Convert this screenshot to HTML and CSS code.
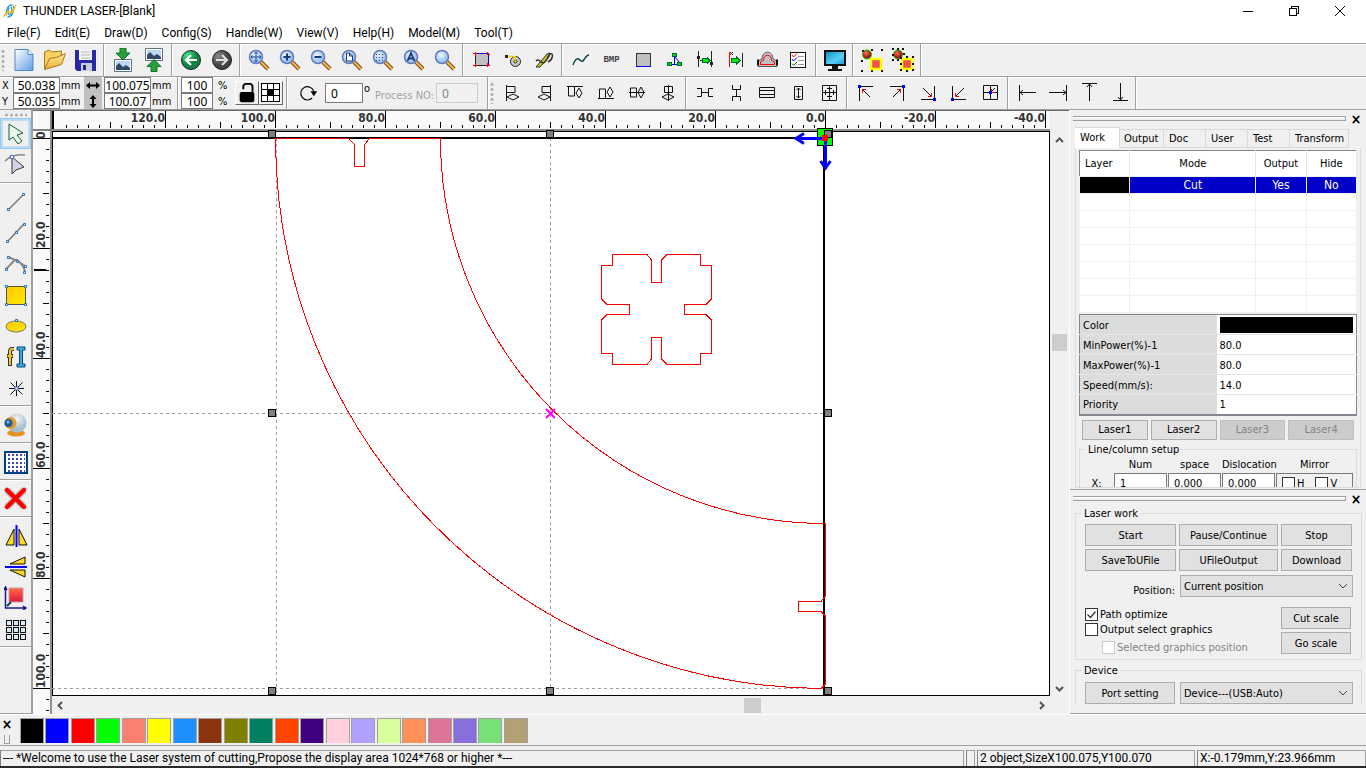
FILE: index.html
```html
<!DOCTYPE html>
<html lang="en">
<head>
    <meta charset="UTF-8">
    <meta name="viewport" content="width=device-width, initial-scale=1.0">
    <title>THUNDER LASER-[Blank]</title>
    <link rel="stylesheet" href="styles.css">
</head>
<body>
    <svg class="defs" aria-hidden="true">
        <defs>
            <linearGradient id="page" x1="0" y1="0" x2="1" y2="1">
                <stop offset="0" stop-color="#ffffff"/>
                <stop offset="1" stop-color="#5f9fe8"/>
            </linearGradient>
            <linearGradient id="folder" x1="0" y1="0" x2="0" y2="1">
                <stop offset="0" stop-color="#ffe9a0"/>
                <stop offset="1" stop-color="#f0b030"/>
            </linearGradient>
            <linearGradient id="sky" x1="0" y1="0" x2="1" y2="1">
                <stop offset="0" stop-color="#1090c8"/>
                <stop offset="0.6" stop-color="#58d0f4"/>
                <stop offset="1" stop-color="#18a0d8"/>
            </linearGradient>
            <linearGradient id="gold" x1="0" y1="0" x2="1" y2="1">
                <stop offset="0" stop-color="#ffc800"/>
                <stop offset="1" stop-color="#ffe800"/>
            </linearGradient>
            <linearGradient id="redbox" x1="0" y1="0" x2="0" y2="1">
                <stop offset="0" stop-color="#ff6a4a"/>
                <stop offset="1" stop-color="#d81838"/>
            </linearGradient>
            <radialGradient id="lens" cx="0.4" cy="0.35">
                <stop offset="0" stop-color="#f0f8ff"/>
                <stop offset="1" stop-color="#9cc4ee"/>
            </radialGradient>
            <radialGradient id="greenball" cx="0.3" cy="0.25">
                <stop offset="0" stop-color="#40e880"/>
                <stop offset="1" stop-color="#108040"/>
            </radialGradient>
            <radialGradient id="grayball" cx="0.3" cy="0.3">
                <stop offset="0" stop-color="#8a8a8a"/>
                <stop offset="1" stop-color="#404040"/>
            </radialGradient>
            <radialGradient id="redball" cx="0.4" cy="0.35">
                <stop offset="0" stop-color="#ff7050"/>
                <stop offset="1" stop-color="#a01010"/>
            </radialGradient>
            <radialGradient id="cam" cx="0.5" cy="0.3">
                <stop offset="0" stop-color="#f4f8fc"/>
                <stop offset="1" stop-color="#a8c0d4"/>
            </radialGradient>
            <symbol id="magnifier" viewBox="0 0 24 24">
                <path d="M14 14l7 7" stroke="#7c4a10" stroke-width="4"/>
                <path d="M14 14l7 7" stroke="#f4bc50" stroke-width="2"/>
                <circle cx="9" cy="9" r="6.5" fill="url(#lens)" stroke="#6478c0" stroke-width="1.5"/>
            </symbol>
            <symbol id="picture" viewBox="0 0 18 13">
                <path d="M.5.5h17v12H.5z" fill="#fff" stroke="#607080"/>
                <path d="M2 2h14v9H2z" fill="#bcd8f4"/>
                <path d="M2 11V7l3-3 4 4 3-2 4 3v2z" fill="#304868"/>
            </symbol>
            <pattern id="hticks" x="113" y="0" width="110" height="18" patternUnits="userSpaceOnUse">
                <path d="M.5 0v17M55.5 11v6M11.5 14v3M22.5 14v3M33.5 14v3M44.5 14v3M66.5 14v3M77.5 14v3M88.5 14v3M99.5 14v3" stroke="#000"/>
            </pattern>
            <pattern id="vticks" x="0" y="7" width="17" height="110" patternUnits="userSpaceOnUse">
                <path d="M0 .5h17M10 55.5h6M13 11.5h3M13 22.5h3M13 33.5h3M13 44.5h3M13 66.5h3M13 77.5h3M13 88.5h3M13 99.5h3" stroke="#000"/>
            </pattern>
        </defs>
    </svg>

    <header class="titlebar">
        <svg class="logo" viewBox="0 0 16 16"><path d="M11 1C6 1 3 5 4 13M5 15c5 0 8-5 7-13M7 4c-2 4-2 7 1 9M9 3c2 3 1 7-1 9" fill="none" stroke="#1890c8" stroke-width="1.3"/><path d="M0 15L5 8l4 1 6-8-4 9-4-1z" fill="#f0b818" stroke="#f0b818"/></svg>
        <h1>THUNDER LASER-[Blank]</h1>
        <div class="winbuttons">
            <button aria-label="Minimize"><svg viewBox="0 0 12 12"><path d="M1 6.5h10"/></svg></button>
            <button aria-label="Restore"><svg viewBox="0 0 12 12"><path d="M1.500 3.500h7v7h-7zM3.500 3.500v-2h7v7h-2"/></svg></button>
            <button aria-label="Close"><svg viewBox="0 0 12 12"><path class="smooth" d="M1 1l10 10M11 1L1 11"/></svg></button>
        </div>
    </header>

    <nav class="menubar">
        <a href="#">File(F)</a>
        <a href="#">Edit(E)</a>
        <a href="#">Draw(D)</a>
        <a href="#">Config(S)</a>
        <a href="#">Handle(W)</a>
        <a href="#">View(V)</a>
        <a href="#">Help(H)</a>
        <a href="#">Model(M)</a>
        <a href="#">Tool(T)</a>
    </nav>

    <div class="toolbar">
        <span class="grip"></span>
        <div class="group">
            <button aria-label="New"><svg viewBox="0 0 24 24"><path d="M3 1.500h13l5 5v16H3z" fill="url(#page)" stroke="#5088c0"/><path d="M16 1.500v5h5" fill="#e8f4ff" stroke="#5088c0"/></svg></button>
            <button aria-label="Open"><svg viewBox="0 0 24 24"><path d="M1.500 20V4l5-2 2 2 10-1v5" fill="#f8d060" stroke="#a87818"/><path d="M1.500 21.500l5-11 7-1 9-4-4 11z" fill="url(#folder)" stroke="#a87818"/></svg></button>
            <button aria-label="Save"><svg viewBox="0 0 24 24"><path d="M1 2h21v21H3l-2-2z" fill="#2828a8"/><path d="M5 1h13v11H5z" fill="#f4f4f4"/><path d="M7 4h9M7 7h9M7 10h9" stroke="#b8b8b8"/><path d="M7 15h11v8H7z" fill="#c8ccd8"/><path d="M9 17h3v5H9z" fill="#202880"/></svg></button>
        </div>
        <div class="group">
            <button aria-label="Import"><svg viewBox="0 0 24 24"><use href="#picture" x="3" y="11" width="18" height="13"/><path d="M9 0h6v5h4l-7 7-7-7h4z" fill="#28a040" stroke="#107028"/></svg></button>
            <button aria-label="Export"><svg viewBox="0 0 24 24"><use href="#picture" x="3" y="0" width="18" height="13"/><path d="M9 23.500h6v-5h4l-7-7-7 7h4z" fill="#28a040" stroke="#107028"/></svg></button>
        </div>
        <div class="group">
            <button aria-label="Undo"><svg viewBox="0 0 24 24"><circle cx="12" cy="12" r="9.500" fill="url(#greenball)" stroke="#222"/><path d="M18 12H7M12 7l-5 5 5 5" fill="none" stroke="#fff" stroke-width="2.200"/></svg></button>
            <button aria-label="Redo"><svg viewBox="0 0 24 24"><circle cx="12" cy="12" r="9.500" fill="url(#grayball)" stroke="#222"/><path d="M6 12h11M12 7l5 5-5 5" fill="none" stroke="#ddd" stroke-width="2.200"/></svg></button>
        </div>
        <div class="group">
            <button aria-label="Pan"><svg viewBox="0 0 24 24"><use href="#magnifier"/><path d="M9 4v10M4 9h10M7.500 5.500L9 4l1.500 1.500M7.500 12.500L9 14l1.500-1.500M5.500 7.500L4 9l1.500 1.500M12.500 7.500L14 9l-1.500 1.500" fill="none" stroke="#184890"/></svg></button>
            <button aria-label="Zoom in"><svg viewBox="0 0 24 24"><use href="#magnifier"/><path d="M5.500 9h7M9 5.500v7" stroke="#183878" stroke-width="2"/></svg></button>
            <button aria-label="Zoom out"><svg viewBox="0 0 24 24"><use href="#magnifier"/><path d="M5.500 9h7" stroke="#183878" stroke-width="2"/></svg></button>
            <button aria-label="Zoom page"><svg viewBox="0 0 24 24"><use href="#magnifier"/><path d="M6.500 5h3l3 3v5h-6zM9.500 5v3h3" fill="#fff" stroke="#184078"/></svg></button>
            <button aria-label="Zoom selection"><svg viewBox="0 0 24 24"><use href="#magnifier"/><path d="M5 6.500h8M5 9.500h8M5 12.500h8" stroke="#385090" stroke-dasharray="1 2"/></svg></button>
            <button aria-label="Zoom all"><svg viewBox="0 0 24 24"><use href="#magnifier"/><path d="M5.500 13L9 5l3.500 8M7 10.500h4" fill="none" stroke="#183878" stroke-width="1.800"/></svg></button>
            <button aria-label="Zoom window"><svg viewBox="0 0 24 24"><use href="#magnifier"/></svg></button>
        </div>
        <div class="group">
            <button aria-label="Frame"><svg class="crisp" viewBox="0 0 24 24"><path d="M5 5.500h13v12H5z" fill="#c0c0c0" stroke="#222"/><path d="M5 5.500h12M18.500 6v11" stroke="#00f"/><path d="M3 5.500h4M5.500 4v4M17 6.500h3M17.500 4v3M3 17.500h4M5.500 16v3M16 17.500h4M17.500 15v4" stroke="red"/></svg></button>
            <button aria-label="Cut path"><svg viewBox="0 0 24 24"><circle cx="14.500" cy="13.500" r="5" fill="#c8c8c8" stroke="#222"/><circle cx="14.500" cy="13.500" r="1.500" fill="#ff0" stroke="#222"/><path d="M6 8.500h8v4" fill="none" stroke="#f0d800" stroke-width="1.500"/><path d="M4 7h3v3H4z" fill="#222"/></svg></button>
            <button aria-label="Simulate pen"><svg viewBox="0 0 24 24"><path d="M4 19L15 6l3-1-1 4-9 10z" fill="#c8c020" stroke="#333"/><path d="M4 13c4-4 5 5 9 1 5-6 2-6 5-8 4-2 3 6-2 8" fill="none" stroke="#333" stroke-width="1.500"/></svg></button>
        </div>
        <div class="group">
            <button aria-label="Smooth"><svg viewBox="0 0 24 24"><path d="M4 17c3-8 5-7 8-4 3 2 4-6 8-6" fill="none" stroke="#064444" stroke-width="1.500"/></svg></button>
            <button class="bmp">BMP</button>
            <button aria-label="Rectangle"><svg class="crisp" viewBox="0 0 24 24"><path d="M5.500 5.500h14v13h-14z" fill="#c0c0c0" stroke="#333"/><path d="M5 18.500h15" stroke="#00f"/></svg></button>
            <button aria-label="Nodes"><svg class="crisp" viewBox="0 0 24 24"><path d="M12.500 7v10M7 16.500h10" stroke="#00f"/><path class="smooth" d="M13 9l5 6" stroke="#00f"/><path d="M10.500 5.500h4v3h-4zM5.500 14.500h4v3h-4zM15.500 14.500h4v3h-4z" fill="#0d0" stroke="#063"/></svg></button>
            <button aria-label="Distance"><svg class="crisp" viewBox="0 0 24 24"><path d="M5.500 3v16M18.500 3v16M7 12.500h2" stroke="#222"/><path d="M9 10.500h5v-1l3 3-3 3v-1H9z" fill="#0e0" stroke="#063"/><path d="M4 8h3v3H4zM17 14h3v3h-3z" fill="#222"/></svg></button>
            <button aria-label="Offset"><svg class="crisp" viewBox="0 0 24 24"><path d="M5.500 4v15" stroke="red"/><path d="M18.500 5v14" stroke="#222"/><path d="M7 10.500h5v-2l4 4-4 4v-2H7z" fill="#0e0" stroke="#063"/><path class="smooth" d="M6 4l3 3M9 4L6 7" stroke="#222"/></svg></button>
            <button aria-label="Outline"><svg viewBox="0 0 24 24"><path d="M3 18.500V13l4-2c0-9 11-9 11 0l4 2v5.500z" fill="#c0c0c0" stroke="#555"/><path d="M5.500 16.500V14l3-1.500c0-7 8-7 8 0l3 1.500v2.500z" fill="none" stroke="red"/><path d="M3 11.500v6M22 11.500v6" stroke="#111" stroke-width="2"/></svg></button>
            <button aria-label="Check list"><svg class="crisp" viewBox="0 0 24 24"><path d="M4.500 4.500h15v15h-15z" fill="#fff" stroke="#111"/><path d="M12 8.500h6M12 12.500h6M12 16.500h6" stroke="#999"/><path class="smooth" d="M6 7l1.500 2L11 5.500" fill="none" stroke="red"/><path class="smooth" d="M6 11l1.500 2L11 9.500" fill="none" stroke="#00f"/><path class="smooth" d="M6 15.500l1.500 2L11 14" fill="none" stroke="green"/></svg></button>
        </div>
        <div class="group">
            <button aria-label="Preview"><svg viewBox="0 0 24 24"><path d="M1 2h22v16H1zM9 18h6v3h4v2H5v-2h4z" fill="#111"/><path d="M3 4h18v12H3z" fill="url(#sky)"/></svg></button>
        </div>
        <div class="group">
            <button aria-label="Group"><svg viewBox="0 0 24 24"><path d="M2 2h2v2H2zM11 1h2v2h-2zM21 1h2v2h-2zM1 12h2v2H1zM1 22h2v2H1zM11 22h2v2h-2zM21 22h2v2h-2z" fill="#111"/><circle cx="7" cy="6.500" r="4.500" fill="url(#redball)" stroke="#0c0"/><path d="M11 11h10v10H11z" fill="#f05050" stroke="#ff0" stroke-width="2.500"/></svg></button>
            <button aria-label="Ungroup"><svg viewBox="0 0 24 24"><circle cx="7" cy="6.500" r="4.500" fill="url(#redball)" stroke="#0c0"/><path d="M11 11h10v10H11z" fill="#f05050" stroke="#ff0" stroke-width="2.500"/><path d="M1 0h2v2H1zM6 0h2v2H6zM11 0h2v2h-2zM1 6h2v2H1zM1 11h2v2H1zM6 11h2v2H6zM12 5h2v2h-2zM9 9h2v2H9zM15 8h2v2h-2zM21 8h2v2h-2zM9 15h2v2H9zM9 21h2v2H9zM15 22h2v2h-2zM21 15h2v2h-2zM21 21h2v2h-2z" fill="#111"/></svg></button>
        </div>
    </div>

    <div class="toolbar props">
        <div class="group pos">
            <label for="posX">X</label><input id="posX" value="50.038"><span class="unit">mm</span>
            <svg class="axis" viewBox="0 0 18 16"><path d="M3 8.500h12" stroke="#000" stroke-width="2"/><path d="M2 8.500l4-3.500v7zM16 8.500l-4-3.500v7z"/></svg>
            <input aria-label="Width" value="100.075"><span class="unit">mm</span>
            <label for="posY">Y</label><input id="posY" value="50.035"><span class="unit">mm</span>
            <svg class="axis" viewBox="0 0 18 16"><path d="M9 3v10" stroke="#000" stroke-width="2"/><path d="M9 2l3.500 4h-7zM9 15l3.500-4h-7z"/></svg>
            <input aria-label="Height" value="100.07"><span class="unit">mm</span>
        </div>
        <div class="group scale">
            <div class="percent">
                <input aria-label="Scale X" value="100"><span class="unit">%</span>
                <input aria-label="Scale Y" value="100"><span class="unit">%</span>
            </div>
            <button class="raised" aria-label="Lock ratio"><svg viewBox="0 0 24 24"><path d="M8 8V4l2-2h6l2 2v8" fill="none" stroke="#000" stroke-width="2"/><rect x="4" y="11" width="16" height="11" rx="2"/></svg></button>
            <button class="raised" aria-label="Anchor"><svg class="crisp" viewBox="0 0 22 22"><path d="M1.500 1.500h18v18h-18zM7.500 2v18M13.500 2v18M2 7.500h18M2 13.500h18" fill="#fff" stroke="#000"/><path d="M8 8h5v5H8z"/></svg></button>
        </div>
        <div class="group rotate">
            <svg class="spin" viewBox="0 0 24 24"><path d="M19 10a8 8 0 1 0-2 8" fill="none" stroke="#000" stroke-width="1.300"/><path d="M15 10h8l-4 6z"/></svg>
            <input aria-label="Angle" value="0"><span class="degree">o</span>
            <label for="process" class="dim">Process NO:</label><input id="process" value="0" disabled>
        </div>
        <span class="grip"></span>
        <div class="group lines">
            <button aria-label="Align left"><svg viewBox="0 0 24 24"><path d="M5.500 4v16M6 5.500h8v6H6M6 16l6-3 6 3-6 3z"/></svg></button>
            <button aria-label="Align right"><svg viewBox="0 0 24 24"><path d="M18.500 4v16M18 5.500h-8v6h8M18 16l-6-3-6 3 6 3z"/></svg></button>
            <button aria-label="Align top"><svg viewBox="0 0 24 24"><path d="M4 5.500h16M5.500 6v9h6V6M16 7l3 5-3 5-3-5z"/></svg></button>
            <button aria-label="Align bottom"><svg viewBox="0 0 24 24"><path d="M4 17.500h16M5.500 17V8h6v9M16 6l3 5-3 5-3-5z"/></svg></button>
            <button aria-label="Align middle"><svg viewBox="0 0 24 24"><path d="M4 11.500h16M5.500 7v9h6V7zM16 6l3 5.500-3 5.500-3-5.500z"/></svg></button>
            <button aria-label="Align center"><svg viewBox="0 0 24 24"><path d="M12.500 4v16M8.500 5.500h8v6h-8zM6 16l6-3 6 3-6 3z"/></svg></button>
        </div>
        <div class="group lines">
            <button aria-label="Space horizontally"><svg viewBox="0 0 24 24"><path d="M4 7.500h4.500v8H4M20 7.500h-4.500v8H20M8 11.500h8"/></svg></button>
            <button aria-label="Space vertically"><svg viewBox="0 0 24 24"><path d="M8.500 4v4.500h8V4M8.500 20v-4.500h8V20M12.500 8v8M10 15.500h5"/></svg></button>
            <button aria-label="Same width"><svg viewBox="0 0 24 24"><path d="M4.500 6.500h15v10h-15zM4.500 9.500h15M4.500 13.500h15"/></svg></button>
            <button aria-label="Same height"><svg viewBox="0 0 24 24"><path d="M8.500 5.500h8v13h-8zM12.500 7v10M10.500 9l2-2 2 2M10.500 15l2 2 2-2"/></svg></button>
            <button aria-label="Same size"><svg viewBox="0 0 24 24"><path d="M5.500 4.500h14v15h-14zM12.500 5v14M5 11.500h14M8.500 9v5M16.500 9v5M10 7.500h5M10 15.500h5"/></svg></button>
        </div>
        <div class="group lines">
            <button aria-label="To top left"><svg viewBox="0 0 24 24"><path d="M5.500 20V5.500H19M8 8l8 8"/><path class="red" d="M8.500 12V8.500H12"/><path class="blue" d="M4 4h3v3H4z"/></svg></button>
            <button aria-label="To top right"><svg viewBox="0 0 24 24"><path d="M18.500 20V5.500H5M16 8l-8 8"/><path class="red" d="M15.500 12V8.500H12"/><path class="blue" d="M17 4h3v3h-3z"/></svg></button>
            <button aria-label="To bottom right"><svg viewBox="0 0 24 24"><path d="M18.500 5v13.500H5M7 7l8 8"/><path class="red" d="M15.500 12v3.500H12"/><path class="blue" d="M17 17h3v3h-3z"/></svg></button>
            <button aria-label="To bottom left"><svg viewBox="0 0 24 24"><path d="M5.500 5v13.500H19M17 7l-8 8"/><path class="red" d="M8.500 12v3.500H12"/><path class="blue" d="M4 17h3v3H4z"/></svg></button>
            <button aria-label="To center"><svg viewBox="0 0 24 24"><path d="M5.500 4.500h14v14h-14zM12.500 4v15M5 11.500h15M17 7l-4 4"/><path class="red" d="M13.500 8v3.500H17"/><path class="blue" d="M11 10h3v3h-3z"/></svg></button>
        </div>
        <div class="group lines last">
            <button aria-label="To left edge"><svg viewBox="0 0 24 24"><path d="M4.500 4v16M5 11.500h16M8 9l-3 2.500L8 14"/></svg></button>
            <button aria-label="To right edge"><svg viewBox="0 0 24 24"><path d="M20.500 4v16M3 11.500h17M17 9l3 2.500-3 2.500"/></svg></button>
            <button aria-label="To top edge"><svg viewBox="0 0 24 24"><path d="M5 2.500h15M12.500 3v17M10 6l2.500-3L15 6"/></svg></button>
            <button aria-label="To bottom edge"><svg viewBox="0 0 24 24"><path d="M5 19.500h15M12.500 2v17M10 16l2.500 3 2.500-3"/></svg></button>
        </div>
    </div>

    <main>
        <aside class="tools">
            <span class="grip-h"></span>
            <div class="vgroup">
                <button class="active" aria-label="Pick"><svg viewBox="0 0 24 24"><path d="M5 2v16l4-3 5 7 4-3-5-6 6-2z" fill="#e8f8e8" stroke="#1c5c3c"/></svg></button>
                <button aria-label="Edit node"><svg viewBox="0 0 24 24"><path d="M1 8C7 2 14 1 21 2" fill="none" stroke="#888" stroke-width="1.500"/><path d="M8 4v17l4-4 8-3z" fill="#d0d4e8" stroke="#333"/><path d="M6.500 2.500h3v3h-3z" fill="#fff" stroke="#4868c8"/></svg></button>
            </div>
            <div class="vgroup">
                <button aria-label="Line"><svg viewBox="0 0 24 24"><path d="M4 20L20 4" stroke="#777" stroke-width="1.500"/><path class="node" d="M3.500 18.500h2v2h-2zM18.500 3.500h2v2h-2z"/></svg></button>
                <button aria-label="Polyline"><svg viewBox="0 0 24 24"><path d="M3 21L20 3" stroke="#777" stroke-width="1.500"/><path class="node" d="M2.500 19.500h2v2h-2zM11.500 10.500h2v2h-2zM19.500 2.500h2v2h-2z"/></svg></button>
                <button aria-label="Curve"><svg viewBox="0 0 24 24"><path d="M4 5c9 3 13 6 17 9M2 17C8 11 11 7 13 8c3 2 6 5 8 11" fill="none" stroke="#888" stroke-width="2"/><path class="node" d="M3.500 4.500h2v2h-2zM1.500 16.500h2v2h-2zM12.500 8.500h2v2h-2zM20.500 13.500h2v2h-2zM19.500 19.500h2v2h-2z"/></svg></button>
                <button aria-label="Rectangle"><svg viewBox="0 0 24 24"><path d="M2.500 3.500h19v18h-19z" fill="url(#gold)" stroke="#555"/><path class="node" d="M1.500 2.500h2v2h-2zM20.500 2.500h2v2h-2zM1.500 20.500h2v2h-2zM20.500 20.500h2v2h-2z"/></svg></button>
                <button aria-label="Ellipse"><svg viewBox="0 0 24 24"><ellipse cx="12" cy="12.500" rx="10" ry="5.500" fill="url(#gold)" stroke="#777"/><path class="node" d="M11.500 5.500h2v2h-2z"/></svg></button>
                <button aria-label="Text"><svg viewBox="0 0 24 24"><path d="M10 4H8Q6 4 6 7v14M3 11h6" fill="none" stroke="#333" stroke-width="4"/><path d="M10 4H8Q6 4 6 7v13M3.500 11h5" fill="none" stroke="#f8c818" stroke-width="2"/><path d="M13 2h8v3h-2.500v14H21v3h-8v-3h2.500V5H13z" fill="#40a8e0" stroke="#104870"/></svg></button>
                <button aria-label="Point"><svg viewBox="0 0 24 24"><path d="M12.500 5v15M5 12.500h15M6.500 6.500l12 12M18.500 6.500l-12 12" stroke="#111"/><path d="M11 11h3v3h-3z" fill="#fff" stroke="#4868c8"/></svg></button>
            </div>
            <div class="vgroup">
                <button aria-label="Camera"><svg viewBox="0 0 24 24"><ellipse cx="12" cy="20" rx="9" ry="3.500" fill="#e89020"/><circle cx="13" cy="10" r="9.500" fill="url(#cam)"/><circle cx="6.500" cy="10" r="6" fill="#e89828"/><circle cx="4.500" cy="10" r="4" fill="#1c5c98"/><circle cx="4" cy="9" r="1.500" fill="#80b8e8"/></svg></button>
            </div>
            <div class="vgroup">
                <button aria-label="Grid"><svg class="crisp" viewBox="0 0 24 24"><path d="M1 2h22v21H1z" fill="#fff" stroke="#004080" stroke-width="2"/><path d="M4 5h17M4 9h17M4 13h17M4 17h17M4 21h17" stroke="#4040c0" stroke-width="2" stroke-dasharray="2 2"/></svg></button>
            </div>
            <div class="vgroup">
                <button aria-label="Delete"><svg viewBox="0 0 24 24"><path d="M3 3l17 17M20 3L3 20" stroke="#b8c4c4" stroke-width="7"/><path d="M3 3l17 17M20 3L3 20" stroke="red" stroke-width="4.500" stroke-linecap="round"/></svg></button>
            </div>
            <div class="vgroup">
                <button aria-label="Mirror horizontally"><svg viewBox="0 0 24 24"><path d="M10 5v16H2zM15 5v16h8z" fill="#ffd820" stroke="#111"/><path d="M12.500 1v22" stroke="#00f" stroke-width="2"/></svg></button>
                <button aria-label="Mirror vertically"><svg viewBox="0 0 24 24"><path d="M21 2v7H6zM21 22v-7H6z" fill="#ffd820" stroke="#111"/><path d="M1 12h22" stroke="#00f" stroke-width="2"/></svg></button>
                <button aria-label="Origin"><svg viewBox="0 0 24 24"><path d="M5 2h14v14H5z" fill="url(#redbox)" stroke="#c8a0a0"/><path d="M1.500 2v20H22M19 20l3 2-3 2M0 4l1.500-3L3 4" fill="none" stroke="#181890" stroke-width="1.500"/><path d="M3 20l4-4" stroke="#104040" stroke-width="2"/></svg></button>
                <button aria-label="Array"><svg class="crisp" viewBox="0 0 24 24"><path d="M2.500 3.500h5v5h-5zM9.500 3.500h5v5h-5zM16.500 3.500h5v5h-5zM2.500 10.500h5v5h-5zM9.500 10.500h5v5h-5zM16.500 10.500h5v5h-5zM2.500 17.500h5v5h-5zM9.500 17.500h5v5h-5zM16.500 17.500h5v5h-5z" fill="#d8ecf8" stroke="#111"/></svg></button>
            </div>
        </aside>

        <section class="workspace">
            <div class="corner"></div>
            <svg class="hruler">
                <rect x="5" width="100%" height="18" fill="url(#hticks)"/>
                <path d="M1 0v18" stroke="#000" stroke-width="2"/>
                <g text-anchor="end">
                    <text x="113" y="11">120.0</text>
                    <text x="223" y="11">100.0</text>
                    <text x="333" y="11">80.0</text>
                    <text x="443" y="11">60.0</text>
                    <text x="553" y="11">40.0</text>
                    <text x="663" y="11">20.0</text>
                    <text x="773" y="11">0.0</text>
                    <text x="883" y="11">-20.0</text>
                    <text x="993" y="11">-40.0</text>
                </g>
            </svg>
            <svg class="vruler">
                <rect width="17" height="100%" fill="url(#vticks)"/>
                <path d="M1 139h12" stroke="#000" stroke-width="2"/>
                <text transform="translate(12 8) rotate(-90)">0</text>
                <text transform="translate(12 117) rotate(-90)">20.0</text>
                <text transform="translate(12 227) rotate(-90)">40.0</text>
                <text transform="translate(12 337) rotate(-90)">60.0</text>
                <text transform="translate(12 447) rotate(-90)">80.0</text>
                <text transform="translate(12 557) rotate(-90)">100.0</text>
            </svg>
            <div class="canvas">
                <svg>
                    <g transform="translate(-53 -132)">
                        <g fill="none" stroke="#a0a090" stroke-dasharray="3 3">
                            <path d="M276.500 138V695M550.500 138V695"/>
                            <path d="M52 413.500H825M52 688.500H825"/>
                        </g>
                        <path d="M52 138H824V695" fill="none" stroke="#000" stroke-width="2"/>
                        <g fill="none" stroke="#f00">
                            <path d="M440.500 138.500H369.500L364.500 144.500V166.500H354.500V144.500L348.500 138.500H275.500A550 550 0 0 0 821 688.500L825.500 684V616L821 611.500H798.500V601.500H821L825.500 596V523.500A385 385 0 0 1 440.500 138.500z"/>
                            <path d="M612.500 254.500H647L651.500 260V282.500H661.500V260L667 254.500H700.500V265.500H711.500V299L706 304.500H684.500V314.500H706L711.500 320V353.500H700.500V364.500H667L661.500 359V337.500H651.500V359L647 364.500H612.500V353.500H601.500V320L607 314.500H629.500V304.500H607L601.500 299V265.500H612.500z"/>
                        </g>
                        <path class="smooth" d="M546 409l9 9M555 409l-9 9" stroke="#f0f" stroke-width="2"/>
                        <path d="M817.500 128.500h15v17h-15z" fill="#0f0" stroke="#000"/>
                        <g fill="#808080" stroke="#000">
                            <path d="M268.500 130.500h7v7h-7zM546.500 130.500h7v7h-7zM824.500 130.500h7v7h-7z"/>
                            <path d="M268.500 409.500h7v7h-7zM824.500 409.500h7v7h-7z"/>
                            <path d="M268.500 687.500h7v7h-7zM546.500 687.500h7v7h-7zM824.500 687.500h7v7h-7z"/>
                        </g>
                        <path class="smooth" d="M825 138.500H796M825.500 138v31M804 133.500l-8 5 8 5M820.500 161l5 7 5-7" fill="none" stroke="#00f" stroke-width="3"/>
                        <path d="M822 135h6v6h-6z" fill="#f00"/>
                    </g>
                </svg>
            </div>
            <div class="vscroll">
                <svg class="arrow" viewBox="0 0 9 9"><path d="M1 6l3.500-3.500L8 6"/></svg>
                <span class="thumb"></span>
                <svg class="arrow" viewBox="0 0 9 9"><path d="M1 3l3.500 3.500L8 3"/></svg>
            </div>
            <div class="hscroll">
                <svg class="arrow" viewBox="0 0 9 9"><path d="M6 1L2.500 4.500 6 8"/></svg>
                <span class="thumb"></span>
                <svg class="arrow" viewBox="0 0 9 9"><path d="M3 1l3.500 3.500L3 8"/></svg>
            </div>
        </section>

        <aside class="side">
            <section class="dock dock-work">
                <div class="dockbar"><span></span><button aria-label="Close">&#215;</button></div>
                <div class="tabs">
                    <button class="current">Work</button>
                    <button>Output</button>
                    <button>Doc</button>
                    <button>User</button>
                    <button>Test</button>
                    <button>Transform</button>
                </div>
                <div class="tabpage">
                    <table class="layers">
                        <thead>
                            <tr><th class="first">Layer</th><th>Mode</th><th>Output</th><th>Hide</th></tr>
                        </thead>
                        <tbody>
                            <tr class="selected"><td class="black"></td><td>Cut</td><td>Yes</td><td>No</td></tr>
                            <tr><td></td><td></td><td></td><td></td></tr>
                            <tr><td></td><td></td><td></td><td></td></tr>
                            <tr><td></td><td></td><td></td><td></td></tr>
                            <tr><td></td><td></td><td></td><td></td></tr>
                            <tr><td></td><td></td><td></td><td></td></tr>
                            <tr><td></td><td></td><td></td><td></td></tr>
                            <tr><td></td><td></td><td></td><td></td></tr>
                        </tbody>
                    </table>
                    <table class="params">
                        <tr><th>Color</th><td><span class="chip"></span></td></tr>
                        <tr><th>MinPower(%)-1</th><td>80.0</td></tr>
                        <tr><th>MaxPower(%)-1</th><td>80.0</td></tr>
                        <tr><th>Speed(mm/s):</th><td>14.0</td></tr>
                        <tr><th>Priority</th><td>1</td></tr>
                    </table>
                    <div class="lasers">
                        <button class="btn">Laser1</button>
                        <button class="btn">Laser2</button>
                        <button class="btn" disabled>Laser3</button>
                        <button class="btn" disabled>Laser4</button>
                    </div>
                    <fieldset class="setup">
                        <legend>Line/column setup</legend>
                        <div class="setup-grid">
                            <span></span><span>Num</span><span>space</span><span>Dislocation</span><span>Mirror</span>
                            <label for="numX">X:</label>
                            <input id="numX" value="1">
                            <input aria-label="space" value="0.000">
                            <input aria-label="Dislocation" value="0.000">
                            <div class="mirror">
                                <label><input type="checkbox">H</label>
                                <label><input type="checkbox">V</label>
                            </div>
                        </div>
                    </fieldset>
                </div>
            </section>
            <section class="dock dock-laser">
                <div class="dockbar"><span></span><button aria-label="Close">&#215;</button></div>
                <fieldset>
                    <legend>Laser work</legend>
                    <div class="actions">
                        <button class="btn">Start</button>
                        <button class="btn">Pause/Continue</button>
                        <button class="btn">Stop</button>
                        <button class="btn">SaveToUFile</button>
                        <button class="btn">UFileOutput</button>
                        <button class="btn">Download</button>
                    </div>
                    <div class="position">
                        <label for="position">Position:</label>
                        <select id="position"><option>Current position</option></select>
                    </div>
                    <div class="options">
                        <div class="checks">
                            <label><input type="checkbox" checked>Path optimize</label>
                            <label><input type="checkbox">Output select graphics</label>
                            <label class="sub"><input type="checkbox" disabled>Selected graphics position</label>
                        </div>
                        <div class="scales">
                            <button class="btn">Cut scale</button>
                            <button class="btn">Go scale</button>
                        </div>
                    </div>
                </fieldset>
                <fieldset class="device">
                    <legend>Device</legend>
                    <div class="port">
                        <button class="btn">Port setting</button>
                        <select aria-label="Device"><option>Device---(USB:Auto)</option></select>
                    </div>
                </fieldset>
            </section>
        </aside>
    </main>

    <div class="palette">
        <div class="palette-grip"><button aria-label="Close">&#215;</button><span></span></div>
        <div class="swatches">
            <button class="c1" aria-label="Black"></button>
            <button class="c2" aria-label="Blue"></button>
            <button class="c3" aria-label="Red"></button>
            <button class="c4" aria-label="Green"></button>
            <button class="c5" aria-label="Salmon"></button>
            <button class="c6" aria-label="Yellow"></button>
            <button class="c7" aria-label="Sky blue"></button>
            <button class="c8" aria-label="Brown"></button>
            <button class="c9" aria-label="Olive"></button>
            <button class="c10" aria-label="Teal"></button>
            <button class="c11" aria-label="Orange"></button>
            <button class="c12" aria-label="Indigo"></button>
            <button class="c13" aria-label="Pink"></button>
            <button class="c14" aria-label="Lavender"></button>
            <button class="c15" aria-label="Lime"></button>
            <button class="c16" aria-label="Coral"></button>
            <button class="c17" aria-label="Rose"></button>
            <button class="c18" aria-label="Slate blue"></button>
            <button class="c19" aria-label="Light green"></button>
            <button class="c20" aria-label="Tan"></button>
        </div>
    </div>

    <footer class="status">
        <span class="message">--- *Welcome to use the Laser system of cutting,Propose the display area 1024*768 or higher *---</span>
        <span class="blank"></span>
        <span class="size">2 object,SizeX100.075,Y100.070</span>
        <span class="coords">X:-0.179mm,Y:23.966mm</span>
    </footer>
</body>
</html>
```
FILE: styles.css
```css
* {
    box-sizing: border-box;
}

body {
    margin: 0;
    min-height: 100vh;
    display: flex;
    flex-direction: column;
    background: #f0f0f0;
    color: #000;
    font-family: "DejaVu Sans Condensed", "Noto Sans", sans-serif;
    font-size: 11px;
}

button, input, select {
    font: inherit;
    color: inherit;
    margin: 0;
    padding: 0;
    border-radius: 0;
}

button {
    border: none;
    background: none;
}

svg {
    display: block;
    flex: none;
}

.defs {
    position: absolute;
    width: 0;
    height: 0;
}

.crisp {
    shape-rendering: crispEdges;
}

.smooth {
    shape-rendering: auto;
}

/* title and menu */
.titlebar {
    display: flex;
    align-items: center;
    height: 22px;
    padding: 0 3px;
    background: #fff;
}

.logo {
    width: 14px;
    height: 16px;
}

.titlebar h1 {
    margin: 0 auto 0 6px;
    font-family: Roboto, sans-serif;
    font-size: 12px;
    font-weight: normal;
}

.winbuttons {
    display: flex;
}

.winbuttons button {
    width: 46px;
    height: 20px;
    display: flex;
    align-items: center;
    justify-content: center;
}

.winbuttons svg {
    width: 12px;
    height: 12px;
    fill: none;
    stroke: #000;
    shape-rendering: crispEdges;
}

.menubar {
    display: flex;
    align-items: center;
    gap: 14px;
    height: 21px;
    padding-left: 7px;
    background: #fff;
    font-family: Roboto, sans-serif;
    font-size: 12px;
}

.menubar a {
    color: #000;
    text-decoration: none;
}

/* toolbars */
.toolbar {
    display: flex;
    height: 33px;
    border-top: 1px solid #a0a0a0;
    box-shadow: inset 0 1px #fff;
}

.grip {
    width: 6px;
    margin: 5px 0;
    background: radial-gradient(circle, #b0b0b0 1px, transparent 2px) 0 0 / 6px 5px repeat-y;
}

.group {
    display: flex;
    align-items: center;
    margin-right: 1px;
    padding: 0 2px;
    border-right: 1px solid #a0a0a0;
    box-shadow: 1px 0 #fff;
}

.group > button {
    width: 31px;
    height: 30px;
    display: flex;
    align-items: center;
    justify-content: center;
}

.group > button svg {
    width: 24px;
    height: 24px;
}

.group > button.bmp {
    font-family: "Liberation Mono", monospace;
    font-size: 9px;
    font-weight: bold;
    color: #444;
}

.props {
    height: 34px;
    border-bottom: 1px solid #a0a0a0;
}

.props input {
    height: 16px;
    border: 1px solid #7a7a7a;
    background: #fff;
    font-family: "Noto Sans", sans-serif;
    font-size: 12px;
    text-align: center;
}

.pos {
    display: grid;
    grid-template-columns: 11px 47px 24px 18px 2px 47px 18px;
    grid-template-rows: 16px 16px;
    align-content: center;
    width: 178px;
}

.pos input[aria-label] {
    grid-column: 6;
}

.pos .axis {
    width: 18px;
    height: 16px;
    background: #c0c0c0;
}

.unit {
    padding-left: 1px;
}

.scale {
    width: 108px;
}

.percent {
    display: grid;
    grid-template-columns: 32px 22px;
    grid-template-rows: 16px 16px;
    align-items: center;
}

.percent .unit {
    padding-left: 5px;
}

.group > button.raised {
    width: 24px;
    height: 24px;
    border: 1px solid #fff;
    border-right-color: #696969;
    border-bottom-color: #696969;
}

.group > button.raised svg {
    width: 22px;
    height: 22px;
}

.rotate {
    width: 200px;
    padding-left: 10px;
}

.rotate .spin {
    width: 20px;
    height: 22px;
    margin-right: 7px;
}

.rotate input {
    width: 38px;
    height: 20px;
    padding-left: 5px;
    text-align: left;
}

.degree {
    padding: 0 5px 10px 1px;
}

.dim {
    width: 61px;
    padding-top: 4px;
    color: #a0a0a0;
    white-space: nowrap;
}

.rotate input:disabled {
    width: 42px;
    border-color: #ccc;
    background: #f0f0f0;
    color: #838383;
}

.lines svg {
    fill: none;
    stroke: #111;
}

.lines .red {
    stroke: #f00;
}

.lines .blue {
    fill: #00f;
    stroke: none;
}

.lines.last {
    padding: 0 0 0 2px;
}

/* main area */
main {
    flex: 1;
    display: flex;
    min-height: 0;
}

.tools {
    width: 33px;
    border-right: 2px solid #a0a0a0;
    border-bottom: 1px solid #a0a0a0;
}

.grip-h {
    display: block;
    height: 8px;
    margin: 0 4px;
    background: radial-gradient(circle, #b0b0b0 1px, transparent 2px) 0 2px / 5px 6px repeat-x;
}

.vgroup {
    margin-bottom: 1px;
    padding: 2px 0;
    border-bottom: 1px solid #a0a0a0;
    box-shadow: 0 1px #fff;
}

.vgroup:nth-child(2) {
    padding-top: 0;
}

.vgroup button {
    width: 31px;
    height: 31px;
    display: flex;
    align-items: center;
    justify-content: center;
}

.vgroup button.active {
    background: #f0f0f0;
    border: 3px solid #c0dcf3;
    outline: 1px solid #90c8f6;
    outline-offset: -1px;
}

.vgroup svg {
    width: 24px;
    height: 24px;
}

.node {
    fill: #fff;
    stroke: #2070c0;
}

.workspace {
    flex: 1;
    min-width: 0;
    display: grid;
    grid-template-columns: 19px 1fr 19px;
    grid-template-rows: 20px 1fr 18px;
    border-top: 1px solid #696969;
}

.corner {
    border-right: 2px solid #808080;
    border-bottom: 2px solid #808080;
    background: #f8f8f8;
}

.hruler, .vruler {
    background: #fafafa;
    fill: #333;
    font-size: 12px;
    font-weight: bold;
    shape-rendering: crispEdges;
}

.hruler {
    width: 100%;
    height: 20px;
    border-bottom: 2px solid #909090;
}

.vruler {
    grid-row: 2 / 4;
    width: 19px;
    height: 100%;
    border-right: 2px solid #909090;
}

.canvas {
    grid-column: 2;
    grid-row: 2;
    min-width: 0;
    border: 1px solid #000;
    background: #fff;
}

.canvas svg {
    width: 100%;
    height: 100%;
    overflow: visible;
    shape-rendering: crispEdges;
}

.vscroll, .hscroll {
    display: flex;
    align-items: center;
    justify-content: space-between;
    padding: 0 4px;
}

.vscroll {
    grid-column: 3;
    grid-row: 2;
    flex-direction: column;
    padding: 5px 0 3px;
}

.hscroll {
    grid-column: 2;
    grid-row: 3;
}

.arrow {
    width: 9px;
    height: 9px;
    fill: none;
    stroke: #555;
    stroke-width: 2;
}

.vscroll .thumb {
    width: 15px;
    height: 17px;
    margin: 0 0 144px;
    background: #cdcdcd;
}

.hscroll .thumb {
    width: 17px;
    height: 15px;
    margin-left: 403px;
    background: #cdcdcd;
}

/* right side panels */
.side {
    width: 297px;
    flex: none;
    display: flex;
    flex-direction: column;
    border-left: 1px solid #fff;
}

.dock {
    padding-left: 3px;
    border-bottom: 1px solid #a0a0a0;
    overflow: hidden;
}

.dock-work {
    height: 380px;
}

.dock-laser {
    flex: 1;
}

.dockbar {
    display: flex;
    align-items: center;
    height: 17px;
}

.dockbar span {
    width: 274px;
    height: 5px;
    border: 1px solid #a0a0a0;
    border-width: 1px 1px 1px 0;
    box-shadow: inset 0 1px #fff;
}

.dockbar button, .palette-grip button {
    width: 20px;
    font-size: 14px;
    font-weight: bold;
    line-height: 12px;
}

.tabs {
    display: flex;
    align-items: flex-end;
    height: 21px;
    margin-left: 2px;
}

.tabs button {
    width: 42px;
    height: 19px;
    padding-left: 5px;
    border: 1px solid #d9d9d9;
    border-left: none;
    text-align: left;
}

.tabs button:nth-child(2) {
    width: 44px;
    padding-left: 4px;
}

.tabs button:last-child {
    width: 59px;
}

.tabs .current {
    width: 45px;
    height: 21px;
    padding-bottom: 2px;
    border-bottom: none;
    background: #fff;
}

.tabpage {
    width: 286px;
    margin-left: 2px;
    padding: 2px 3px 0;
    border: 1px solid #dcdcdc;
    border-top: none;
    height: 340px;
    overflow: hidden;
}

table {
    border-collapse: collapse;
    table-layout: fixed;
    width: 100%;
    background: #fff;
    font-weight: normal;
}

th {
    font-weight: normal;
}

.layers {
    height: 163px;
    border: 1px solid #828790;
    margin-bottom: 1px;
}

.layers th {
    height: 26px;
    padding: 0;
    border-right: 1px solid #e5e5e5;
}

.layers th:nth-child(2) {
    width: 126px;
}

.layers .first {
    text-align: left;
    padding-left: 5px;
}

.layers td {
    height: 17px;
    padding: 0;
    border: 1px solid #f0f0f0;
    text-align: center;
}

.layers .selected td {
    background: #0000c8;
    color: #fff;
    font-size: 12px;
    line-height: 15px;
}

.layers .selected .black {
    background: #000;
}

.params {
    border: 2px solid #828790;
    border-width: 1px 1px 2px;
}

.params th, .params td {
    height: 20px;
    padding: 1px 3px 0;
    text-align: left;
    border-bottom: 1px solid #e5e5e5;
}

.params th {
    width: 137px;
    background: #dcdcdc;
}

.params .chip {
    display: block;
    height: 16px;
    background: #000;
}

.btn {
    height: 22px;
    border: 1px solid #adadad;
    background: #e1e1e1;
}

.btn:disabled {
    border-color: #bfbfbf;
    background: #ccc;
    color: #838383;
}

.lasers {
    display: grid;
    grid-template-columns: repeat(4, 1fr);
    gap: 3px;
    padding: 4px 3px 3px;
}

.lasers .btn {
    height: 20px;
}

fieldset {
    margin: 0;
    padding: 0;
    border: 1px solid #dcdcdc;
    min-width: 0;
}

legend {
    margin-left: 6px;
    padding: 0 2px;
    line-height: 13px;
}

.setup-grid {
    display: grid;
    grid-template-columns: 33px 53px 53px 53px 77px;
    gap: 0 1px;
    text-align: center;
    line-height: 17px;
}

.setup-grid > input {
    height: 22px;
    padding-left: 5px;
    border: 1px solid #7a7a7a;
    background: #fff;
}

.setup-grid > label {
    padding-top: 5px;
    line-height: 12px;
}

.mirror {
    display: flex;
    gap: 11px;
    padding: 0 5px;
    border: 1px solid #7a7a7a;
    line-height: 12px;
}

label input[type="checkbox"] {
    appearance: none;
    width: 13px;
    height: 13px;
    flex: none;
    border: 1px solid #333;
    background: #fff;
}

.mirror label, .checks label {
    display: flex;
    align-items: center;
    gap: 2px;
}

label input[type="checkbox"]:checked {
    background: #fff url("data:image/svg+xml,%3Csvg xmlns='http://www.w3.org/2000/svg' viewBox='0 0 11 11'%3E%3Cpath d='M1.500 5.500l3 3 5-6' fill='none' stroke='%23333' stroke-width='1.300'/%3E%3C/svg%3E") no-repeat;
}

.dock-laser fieldset {
    width: 287px;
    margin-left: 2px;
    padding-left: 9px;
}

.dock-laser legend {
    margin-left: -3px;
}

.actions {
    display: grid;
    grid-template-columns: 91px 99px 71px;
    gap: 3px;
    padding-top: 4px;
}

.position {
    display: flex;
    gap: 5px;
    margin: 4px 0 10px;
}

.position label {
    width: 90px;
    padding-top: 9px;
    text-align: right;
}

select {
    appearance: none;
    width: 173px;
    height: 22px;
    padding-left: 3px;
    border: 1px solid #adadad;
    background: #e1e1e1 url("data:image/svg+xml,%3Csvg xmlns='http://www.w3.org/2000/svg' viewBox='0 0 10 6'%3E%3Cpath d='M1 1l4 4 4-4' fill='none' stroke='%23444'/%3E%3C/svg%3E") right 4px center / 10px 6px no-repeat;
}

.options {
    display: flex;
    height: 52px;
}

.checks {
    width: 196px;
}

.checks label {
    height: 15px;
}

.checks .sub {
    height: 20px;
    padding-left: 17px;
    color: #838383;
}

.checks input:disabled {
    border-color: #ccc;
}

.scales {
    display: flex;
    flex-direction: column;
    gap: 3px;
    width: 70px;
}

.dock-laser .device {
    margin-top: 4px;
    border-bottom: none;
}

.port {
    display: flex;
    gap: 5px;
    padding-top: 5px;
}

.port .btn {
    width: 90px;
}

/* color palette and status */
.palette {
    display: flex;
    height: 32px;
    border-top: 1px solid #fff;
    border-bottom: 1px solid #a0a0a0;
}

.palette-grip {
    width: 20px;
}

.palette-grip button {
    width: 14px;
    display: block;
    padding-top: 3px;
}

.palette-grip span {
    display: block;
    width: 6px;
    height: 9px;
    margin: 5px 0 0 4px;
    border: 1px solid #a0a0a0;
    border-top: none;
}

.swatches {
    display: flex;
    justify-content: space-between;
    width: 508px;
    padding-top: 3px;
}

.swatches button {
    width: 24px;
    height: 25px;
    border: 1px solid #a0a0a0;
    border-bottom: none;
}

.c1 { background: #000; }
.c2 { background: #00f; }
.c3 { background: #f00; }
.c4 { background: #0f0; }
.c5 { background: #fa8072; }
.c6 { background: #ff0; }
.c7 { background: #1e90ff; }
.c8 { background: #8b3510; }
.c9 { background: #808000; }
.c10 { background: #008060; }
.c11 { background: #ff4500; }
.c12 { background: #400080; }
.c13 { background: #ffd0dc; }
.c14 { background: #b0a0ff; }
.c15 { background: #d8ff9c; }
.c16 { background: #ff9058; }
.c17 { background: #db7498; }
.c18 { background: #8870dc; }
.c19 { background: #78e078; }
.c20 { background: #b4a074; }

.status {
    display: flex;
    gap: 2px;
    height: 22px;
    padding-top: 4px;
    border-bottom: 2px solid #2b2b2b;
    font-family: Roboto, sans-serif;
    font-size: 12px;
    line-height: 15px;
    white-space: nowrap;
}

.status span {
    border: 1px solid #a0a0a0;
    border-left-color: #808080;
    border-bottom: none;
    padding-left: 2px;
}

.message {
    flex: 1;
}

.blank {
    width: 9px;
}

.size {
    width: 218px;
}

.coords {
    width: 169px;
}
```
